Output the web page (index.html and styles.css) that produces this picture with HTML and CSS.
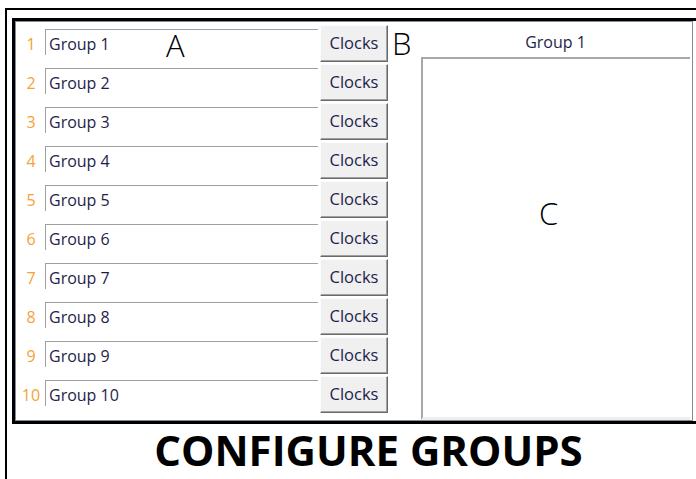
FILE: index.html
```html
<!DOCTYPE html>
<html>
<head>
<meta charset="utf-8">
<link rel="stylesheet" href="styles.css">
</head>
<body>
<div class="frame">
  <div class="dialog">
    <div class="win">
      <div class="list">
        <div class="row"><span class="num">1</span><div class="field">Group 1</div><div class="btn">Clocks</div></div>
        <div class="row"><span class="num">2</span><div class="field">Group 2</div><div class="btn">Clocks</div></div>
        <div class="row"><span class="num">3</span><div class="field">Group 3</div><div class="btn">Clocks</div></div>
        <div class="row"><span class="num">4</span><div class="field">Group 4</div><div class="btn">Clocks</div></div>
        <div class="row"><span class="num">5</span><div class="field">Group 5</div><div class="btn">Clocks</div></div>
        <div class="row"><span class="num">6</span><div class="field">Group 6</div><div class="btn">Clocks</div></div>
        <div class="row"><span class="num">7</span><div class="field">Group 7</div><div class="btn">Clocks</div></div>
        <div class="row"><span class="num">8</span><div class="field">Group 8</div><div class="btn">Clocks</div></div>
        <div class="row"><span class="num">9</span><div class="field">Group 9</div><div class="btn">Clocks</div></div>
        <div class="row"><span class="num">10</span><div class="field">Group 10</div><div class="btn">Clocks</div></div>
      </div>
      <div class="panel">
        <div class="panel-head">Group 1</div>
        <div class="panel-box"></div>
      </div>
      <span class="mark mark-a">A</span>
      <span class="mark mark-b">B</span>
      <span class="mark mark-c">C</span>
    </div>
  </div>
  <div class="caption">CONFIGURE GROUPS</div>
</div>
</body>
</html>
```
FILE: styles.css
```css
html, body {
  margin: 0;
  padding: 0;
  background: #fff;
}
body {
  font-family: "Open Sans", "Noto Sans", sans-serif;
  width: 696px;
  height: 479px;
  overflow: hidden;
}
.frame {
  margin: 8px 0 0 5px;
  width: 691px;
  height: 471px;
  box-sizing: border-box;
  border-left: 2px solid #000;
  border-top: 2px solid #000;
  padding: 8px 0 0 5px;
}
.dialog {
  width: 684px;
  height: 406px;
  box-sizing: border-box;
  border: 3px solid #000;
  border-right: none;
  background: #fff;
}
.win {
  position: relative;
  width: 678px;
  height: 400px;
  box-sizing: border-box;
  border: 1px solid #7e8e9e;
  display: flex;
  background: #fff;
}
.list {
  padding-top: 3px;
  display: flex;
  flex-direction: column;
  gap: 2px;
}
.row {
  display: flex;
  align-items: flex-start;
  height: 37px;
}
.num {
  width: 29px;
  text-align: center;
  color: #f5a236;
  font-size: 16px;
  line-height: 38px;
  padding-left: 1px;
  box-sizing: border-box;
}
.field {
  width: 273px;
  height: 26px;
  margin-top: 4px;
  box-sizing: border-box;
  border-top: 1px solid #a0a0a0;
  border-left: 1px solid #a0a0a0;
  padding-left: 3px;
  font-size: 16px;
  line-height: 28px;
  color: #1e1e4a;
}
.btn {
  margin-left: 2px;
  width: 68px;
  height: 37px;
  box-sizing: border-box;
  background: #f0f0f0;
  border: 1px solid;
  border-color: #fcfcfc #6a6a6a #6a6a6a #fcfcfc;
  box-shadow: inset -1px -1px 0 #a0a0a0;
  font-size: 16.5px;
  line-height: 34px;
  text-align: center;
  color: #1e1e4a;
}
.panel {
  flex: 1;
  display: flex;
  flex-direction: column;
}
.panel-head {
  height: 35px;
  margin-left: 33px;
  margin-right: 2px;
  text-align: center;
  font-size: 16px;
  line-height: 40px;
  color: #1e1e4a;
}
.panel-box {
  margin-left: 33px;
  margin-right: 2px;
  height: 358px;
  border-top: 2px solid #a8a8a8;
  border-left: 2px solid #a8a8a8;
  border-bottom: 3px solid #eeeeee;
  background: #fff;
}
.mark {
  position: absolute;
  font-size: 31px;
  line-height: 1;
  color: #000;
  font-weight: 300;
}
.mark-a { left: 150px; top: 8px; }
.mark-b { left: 376px; top: 6px; }
.mark-c { left: 523px; top: 176px; }
.caption {
  margin-top: 5px;
  padding-left: 29px;
  text-align: center;
  font-size: 42px;
  line-height: 42px;
  font-weight: 700;
  color: #000;
}
```
